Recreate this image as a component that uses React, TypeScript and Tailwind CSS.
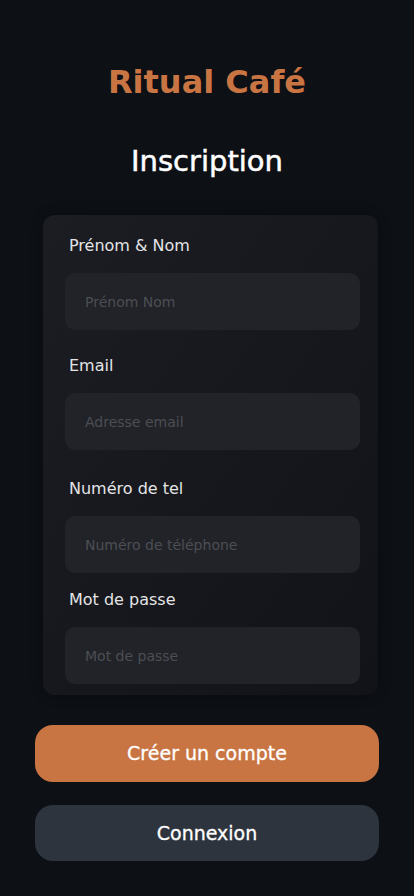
import React from 'react'

const fields = [
  { label: 'Prénom & Nom', placeholder: 'Prénom Nom', type: 'text', gap: 'mt-0' },
  { label: 'Email', placeholder: 'Adresse email', type: 'email', gap: 'mt-[24px]' },
  { label: 'Numéro de tel', placeholder: 'Numéro de téléphone', type: 'tel', gap: 'mt-[27px]' },
  { label: 'Mot de passe', placeholder: 'Mot de passe', type: 'password', gap: 'mt-[15px]' },
]

function App() {
  return (
    <div className="min-h-screen w-full bg-[#0d1015] font-['DejaVu_Sans',sans-serif] pt-[58px] pb-[35px]">
      <h1 className="h-[48px] flex items-center justify-center text-[32px] font-bold text-[#c97543]">
        Ritual Café
      </h1>
      <h2 className="mt-[35px] h-[42px] flex items-center justify-center text-[29px] text-white [-webkit-text-stroke:0.5px_white]">
        Inscription
      </h2>

      <form
        className="mt-[32px] ml-[43px] w-[335px] rounded-xl bg-gradient-to-br from-[#1b1d22] to-[#111318] shadow-[0_0_12px_rgba(0,0,0,0.35)] pt-[19px] pb-[11px]"
        onSubmit={(e) => e.preventDefault()}
      >
        {fields.map((f) => (
          <div key={f.label} className={f.gap}>
            <label className="block pl-[26px] h-[24px] leading-[24px] text-[16px] text-[#e4e4e6]">
              {f.label}
            </label>
            <input
              type={f.type}
              placeholder={f.placeholder}
              className="mt-[15px] ml-[22px] w-[295px] h-[57px] rounded-[10px] bg-[#212328] px-[20px] text-[14px] text-white placeholder:text-[#4c4e54] outline-none"
            />
          </div>
        ))}
      </form>

      <div className="mt-[30px] ml-[35px] w-[344px] flex flex-col gap-[23px]">
        <button className="h-[57px] rounded-[18px] bg-[#c97543] text-white text-[19px] [-webkit-text-stroke:0.3px_white]">
          Créer un compte
        </button>
        <button className="h-[56px] rounded-[18px] bg-[#2e343e] text-white text-[19px] [-webkit-text-stroke:0.3px_white]">
          Connexion
        </button>
      </div>
    </div>
  )
}

export default App
